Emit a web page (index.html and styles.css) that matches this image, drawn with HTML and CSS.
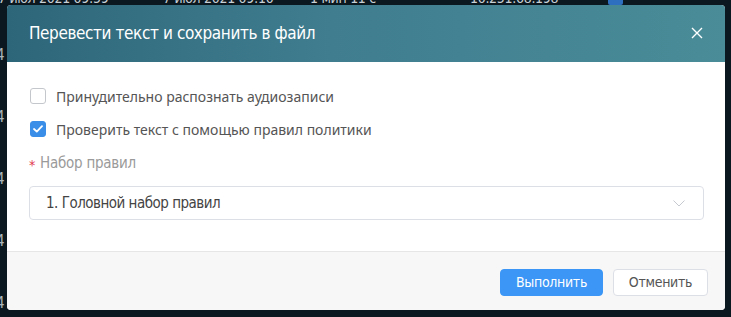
FILE: index.html
```html
<!DOCTYPE html>
<html lang="ru">
<head>
<meta charset="utf-8">
<link rel="stylesheet" href="styles.css">
</head>
<body>
<div class="backdrop">
  <div class="bg-row">
    <span class="c1">7 июл 2021 09:59</span>
    <span class="c2">7 июл 2021 09:10</span>
    <span class="c3">1 мин 11 с</span>
    <span class="c4">10.251.68.198</span>
    <span class="c5"></span>
  </div>
  <div class="bg-col">
    <span>4</span><span>4</span><span>4</span><span>4</span><span>4</span>
  </div>
</div>
<div class="modal">
  <div class="modal-header">
    <div class="modal-title">Перевести текст и сохранить в файл</div>
    <svg class="close" width="12" height="12" viewBox="0 0 12 12"><path d="M1 1L11 11M11 1L1 11" stroke="#fff" stroke-width="1.4" fill="none"/></svg>
  </div>
  <div class="modal-body">
    <label class="check">
      <span class="box"></span>
      <span class="check-label">Принудительно распознать аудиозаписи</span>
    </label>
    <label class="check">
      <span class="box checked"><svg width="10" height="8" viewBox="0 0 10 8"><path d="M1 4L3.8 6.6L9 1.2" stroke="#fff" stroke-width="1.8" fill="none" stroke-linecap="round" stroke-linejoin="round"/></svg></span>
      <span class="check-label">Проверить текст с помощью правил политики</span>
    </label>
    <div class="field-label"><span class="star">*</span>Набор правил</div>
    <div class="select">
      <span class="select-text">1. Головной набор правил</span>
      <svg class="chev" width="12" height="7" viewBox="0 0 12 7"><path d="M0.5 0.5L6 6L11.5 0.5" stroke="#c6c9cf" stroke-width="1" fill="none"/></svg>
    </div>
  </div>
  <div class="modal-footer">
    <button class="btn primary">Выполнить</button>
    <button class="btn">Отменить</button>
  </div>
</div>
</body>
</html>
```
FILE: styles.css
```css
html, body {
  margin: 0;
  padding: 0;
  width: 731px;
  height: 317px;
  overflow: hidden;
  background: #0c1820;
}
body {
  position: relative;
  font-family: "DejaVu Sans Condensed", "DejaVu Sans", sans-serif;
}
.backdrop {
  position: absolute;
  inset: 0;
}
.bg-row {
  position: absolute;
  top: -9px;
  left: 0;
  width: 731px;
  height: 14px;
  font-size: 14px;
  line-height: 14px;
  color: #c8d0d6;
  letter-spacing: -0.3px;
}
.bg-row span { position: absolute; top: 0; white-space: nowrap; }
.bg-row .c1 { left: -2px; }
.bg-row .c2 { left: 163px; }
.bg-row .c3 { left: 310px; }
.bg-row .c4 { left: 470px; }
.bg-row .c5 { left: 608px; top: 2px; width: 15px; height: 12px; background: #2f6fc0; border-radius: 2px; }
.bg-col {
  position: absolute;
  left: -4px;
  top: 46px;
  display: flex;
  flex-direction: column;
  gap: 44px;
  font-size: 15px;
  color: #aab4bb;
}
.modal {
  position: absolute;
  left: 7px;
  top: 5px;
  width: 718px;
  height: 305px;
  background: #fff;
  border-radius: 4px;
  overflow: hidden;
  display: flex;
  flex-direction: column;
}
.modal-header {
  height: 57px;
  flex: none;
  background: linear-gradient(90deg, #2e6679 0%, #3f7d8f 45%, #4a8c98 100%);
  display: flex;
  align-items: center;
  justify-content: space-between;
  padding: 0 22px 0 22px;
  box-sizing: border-box;
}
.modal-title {
  color: #fff;
  font-size: 17px;
  letter-spacing: -0.4px;
  margin-top: -2px;
}
.close { margin-top: -1px; }
.modal-body {
  flex: 1;
  padding: 26px 21px 0 22px;
}
.check {
  display: flex;
  align-items: center;
  height: 16px;
  margin-bottom: 17px;
  cursor: pointer;
}
.box {
  width: 14px;
  height: 14px;
  border: 1px solid #c4c7cc;
  border-radius: 3px;
  box-sizing: content-box;
  display: flex;
  align-items: center;
  justify-content: center;
  margin-left: 1px;
  flex: none;
}
.box.checked {
  background: #3b8ee8;
  border-color: #3b8ee8;
}
.check-label {
  margin-left: 10px;
  font-family: "Noto Sans", "Open Sans", sans-serif;
  font-size: 14px;
  color: #555;
}
.field-label {
  margin-top: 15px;
  font-size: 15px;
  letter-spacing: -0.25px;
  color: #9a9a9a;
  display: flex;
  align-items: center;
}
.star {
  color: #e0384f;
  margin-right: 5px;
  font-size: 14px;
  position: relative;
  top: 2px;
}
.select {
  margin-top: 14px;
  height: 34px;
  border: 1px solid #dcdfe6;
  border-radius: 4px;
  box-sizing: border-box;
  display: flex;
  align-items: center;
  justify-content: space-between;
  padding: 0 18px 0 16px;
}
.select-text {
  font-size: 15px;
  letter-spacing: -0.5px;
  color: #444;
}
.modal-footer {
  height: 59px;
  flex: none;
  background: #f7f7f7;
  border-top: 1px solid #e6e6e6;
  box-sizing: border-box;
  display: flex;
  align-items: center;
  justify-content: flex-end;
  gap: 10px;
  padding: 0 17px 0 0;
}
.btn {
  height: 27px;
  border-radius: 4px;
  border: 1px solid #dcdfe6;
  background: #fff;
  color: #555;
  font-family: "DejaVu Sans Condensed", "DejaVu Sans", sans-serif;
  font-size: 14px;
  letter-spacing: -0.3px;
  padding: 0;
  width: 95px;
  margin-top: 2px;
}
.btn.primary {
  width: 103px;
  background: #3b96f5;
  border-color: #3b96f5;
  color: #fff;
}
```
